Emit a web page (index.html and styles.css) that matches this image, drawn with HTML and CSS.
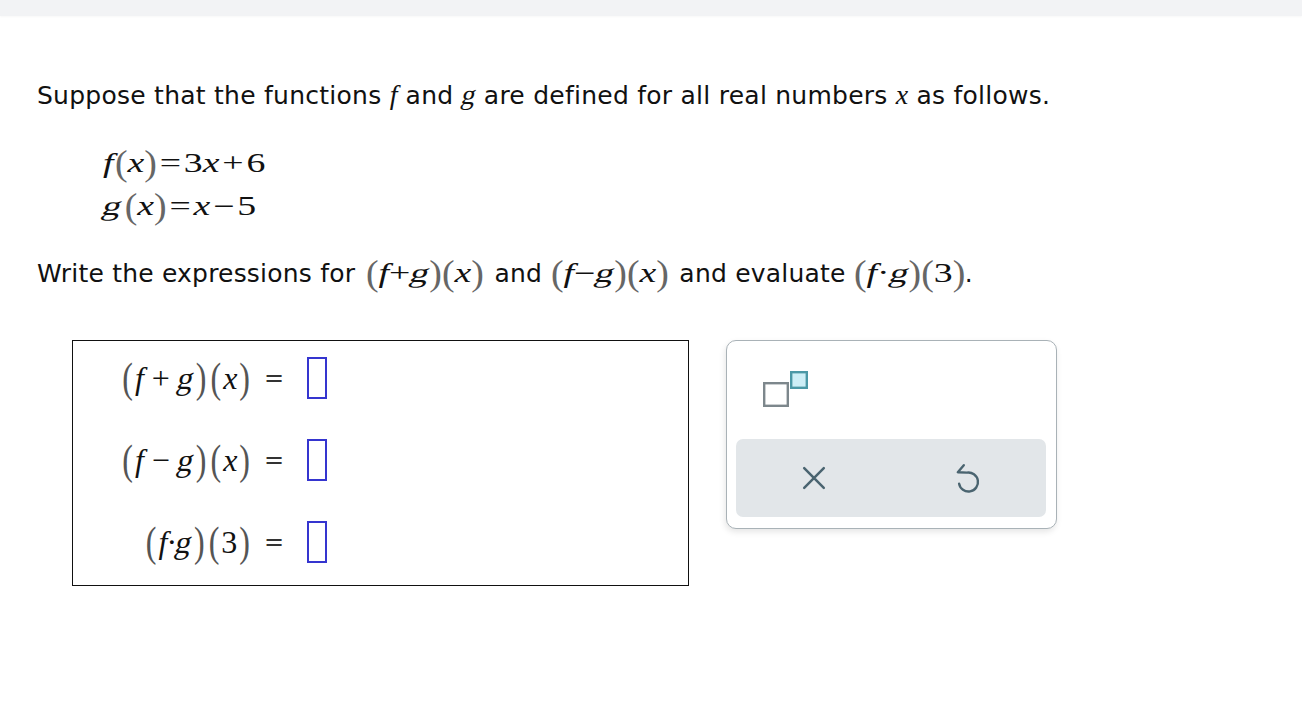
FILE: index.html
```html
<!DOCTYPE html>
<html>
<head>
<meta charset="utf-8">
<link rel="stylesheet" href="styles.css">
</head>
<body>
<div class="topbar"></div>
<main class="content">
  <p class="intro">Suppose that the functions <span class="mi">f</span> and <span class="mi gg">g</span> are defined for all real numbers <span class="mi">x</span> as follows.</p>
  <div class="defs">
    <div class="def"><span class="mx"><span class="mi fsp">f</span><span class="pr">(</span><span class="mi">x</span><span class="pr">)</span><span class="mo">=</span>3<span class="mi">x</span><span class="mo">+</span>6</span></div>
    <div class="def"><span class="mx"><span class="mi gg">g</span><span class="pr gsp">(</span><span class="mi">x</span><span class="pr">)</span><span class="mo">=</span><span class="mi">x</span><span class="mo">−</span>5</span></div>
  </div>
  <p class="task">Write the expressions for <span class="math m1"><span class="mx"><span class="pr">(</span><span class="mi">f</span>+<span class="mi gg">g</span><span class="pr">)</span><span class="pr">(</span><span class="mi">x</span><span class="pr">)</span></span></span> and <span class="math m2"><span class="mx"><span class="pr">(</span><span class="mi">f</span>−<span class="mi gg">g</span><span class="pr">)</span><span class="pr">(</span><span class="mi">x</span><span class="pr">)</span></span></span> and evaluate <span class="math m3"><span class="mx"><span class="pr">(</span><span class="mi">f</span>·<span class="mi gg">g</span><span class="pr">)</span><span class="pr">(</span>3<span class="pr">)</span></span></span>.</p>
  <div class="work">
    <div class="answer-box">
      <div class="lhs"><span class="bp">(</span><span class="mi">f</span><span class="op">+</span><span class="mi gg">g</span><span class="bp">)</span><span class="bp">(</span><span class="mi">x</span><span class="bp">)</span></div>
      <div class="eq">=</div>
      <div class="slot"></div>
      <div class="lhs"><span class="bp">(</span><span class="mi">f</span><span class="op">−</span><span class="mi gg">g</span><span class="bp">)</span><span class="bp">(</span><span class="mi">x</span><span class="bp">)</span></div>
      <div class="eq">=</div>
      <div class="slot"></div>
      <div class="lhs"><span class="bp">(</span><span class="mi">f</span><span class="dot">·</span><span class="mi gg">g</span><span class="bp">)</span><span class="bp">(</span>3<span class="bp">)</span></div>
      <div class="eq">=</div>
      <div class="slot"></div>
    </div>
    <div class="panel">
      <div class="tools">
        <svg class="sup-icon" width="48" height="40" viewBox="0 0 48 40">
          <rect x="2.2" y="13.2" width="23.6" height="22.6" fill="#fff" stroke="#7d878c" stroke-width="2.4"/>
          <rect x="29.2" y="2.2" width="15.6" height="15.6" fill="#cdeef6" stroke="#4b98a6" stroke-width="2.4"/>
        </svg>
      </div>
      <div class="actions">
        <svg class="act" width="26" height="26" viewBox="0 0 26 26">
          <path d="M3.2 3.2 L22.8 22.8 M22.8 3.2 L3.2 22.8" stroke="#4a6470" stroke-width="2.5" fill="none" stroke-linecap="round"/>
        </svg>
        <svg class="act undo" width="28" height="34" viewBox="0 0 28 34">
          <path d="M9.8 4.2 L3.8 11.2 L12.85 11.64 A9.5 9.5 0 1 1 5.1 22.6" stroke="#4a6470" stroke-width="2.4" fill="none" stroke-linecap="round" stroke-linejoin="round"/>
        </svg>
      </div>
    </div>
  </div>
</main>
</body>
</html>
```
FILE: styles.css
```css
html, body {
  margin: 0;
  padding: 0;
  background: #fff;
}
body {
  font-family: "DejaVu Sans", Verdana, sans-serif;
  color: #111;
}
.topbar {
  height: 16px;
  background: #f2f3f5;
  box-shadow: 0 1px 2px rgba(0,0,0,0.03);
}
.content {
  padding: 0 0 0 37px;
}
.intro {
  margin: 64px 0 0;
  font-size: 25px;
  line-height: 30px;
  letter-spacing: 0.25px;
  white-space: nowrap;
}
.mi {
  font-family: "Liberation Serif", "Times New Roman", serif;
  font-style: italic;
  letter-spacing: 0;
}
.mi.gg {
  font-style: normal;
  display: inline-block;
  transform: skewX(-13deg);
}
.intro .mi {
  font-size: 28px;
}
.defs {
  margin: 31px 0 0 66px;
  font-family: "Liberation Serif", "Times New Roman", serif;
  font-size: 27px;
}
.def {
  height: 43px;
  line-height: 43px;
  white-space: nowrap;
}
.mx {
  display: inline-block;
  white-space: nowrap;
  transform: scaleX(1.4);
  transform-origin: left center;
}
.pr {
  color: #666;
  font-style: normal;
  display: inline-block;
  transform: scaleY(1.3);
}
.fsp { margin-right: 1px; }
.gsp { margin-left: 2px; }
.mo {
  margin: 0 2px;
}
.task {
  margin: 28px 0 0;
  font-size: 25px;
  line-height: 34px;
  letter-spacing: 0.2px;
  white-space: nowrap;
}
.math {
  display: inline-block;
  font-family: "Liberation Serif", "Times New Roman", serif;
  font-size: 27px;
  line-height: 34px;
  letter-spacing: 0;
  margin: 0 5px 0 3px;
}
.m1 { width: 115px; }
.m2 { width: 115px; margin-left: 1px; }
.m3 { width: 110px; margin-left: 0; margin-right: 1px; }
.work {
  display: flex;
  align-items: flex-start;
  margin: 49px 0 0 35px;
  gap: 37px;
}
.answer-box {
  box-sizing: border-box;
  width: 617px;
  height: 246px;
  border: 1.6px solid #111;
  display: grid;
  grid-template-columns: 179px 44px 30px;
  grid-auto-rows: 74px;
  row-gap: 8px;
  align-items: center;
  align-content: start;
}
.lhs {
  justify-self: end;
  font-family: "Liberation Serif", "Times New Roman", serif;
  font-size: 32px;
  white-space: nowrap;
}
.bp {
  display: inline-block;
  color: #555;
  font-style: normal;
  transform: scaleY(1.3);
  margin: 0 2px;
}
.op {
  margin: 0 8px;
}
.dot {
  margin: 0 -1px;
}
.eq {
  text-align: center;
  font-family: "DejaVu Sans", sans-serif;
  font-size: 24px;
  color: #333;
}
.slot {
  box-sizing: border-box;
  width: 20px;
  height: 42px;
  margin-left: 11px;
  border: 2px solid #3535cf;
}
.panel {
  box-sizing: border-box;
  width: 331px;
  height: 189px;
  border: 1px solid #a9b2b7;
  border-radius: 10px;
  background: #fff;
  box-shadow: -1px 3px 6px rgba(0,0,0,0.10);
  padding: 29px 10px 10px 9px;
  display: flex;
  flex-direction: column;
}
.tools {
  height: 69px;
  padding-left: 26px;
}
.sup-icon { display: block; }
.actions {
  height: 78px;
  background: #e2e6e9;
  border-radius: 7px;
  display: flex;
  align-items: center;
  gap: 127px;
  padding-left: 65px;
}
.act { display: block; }
```
